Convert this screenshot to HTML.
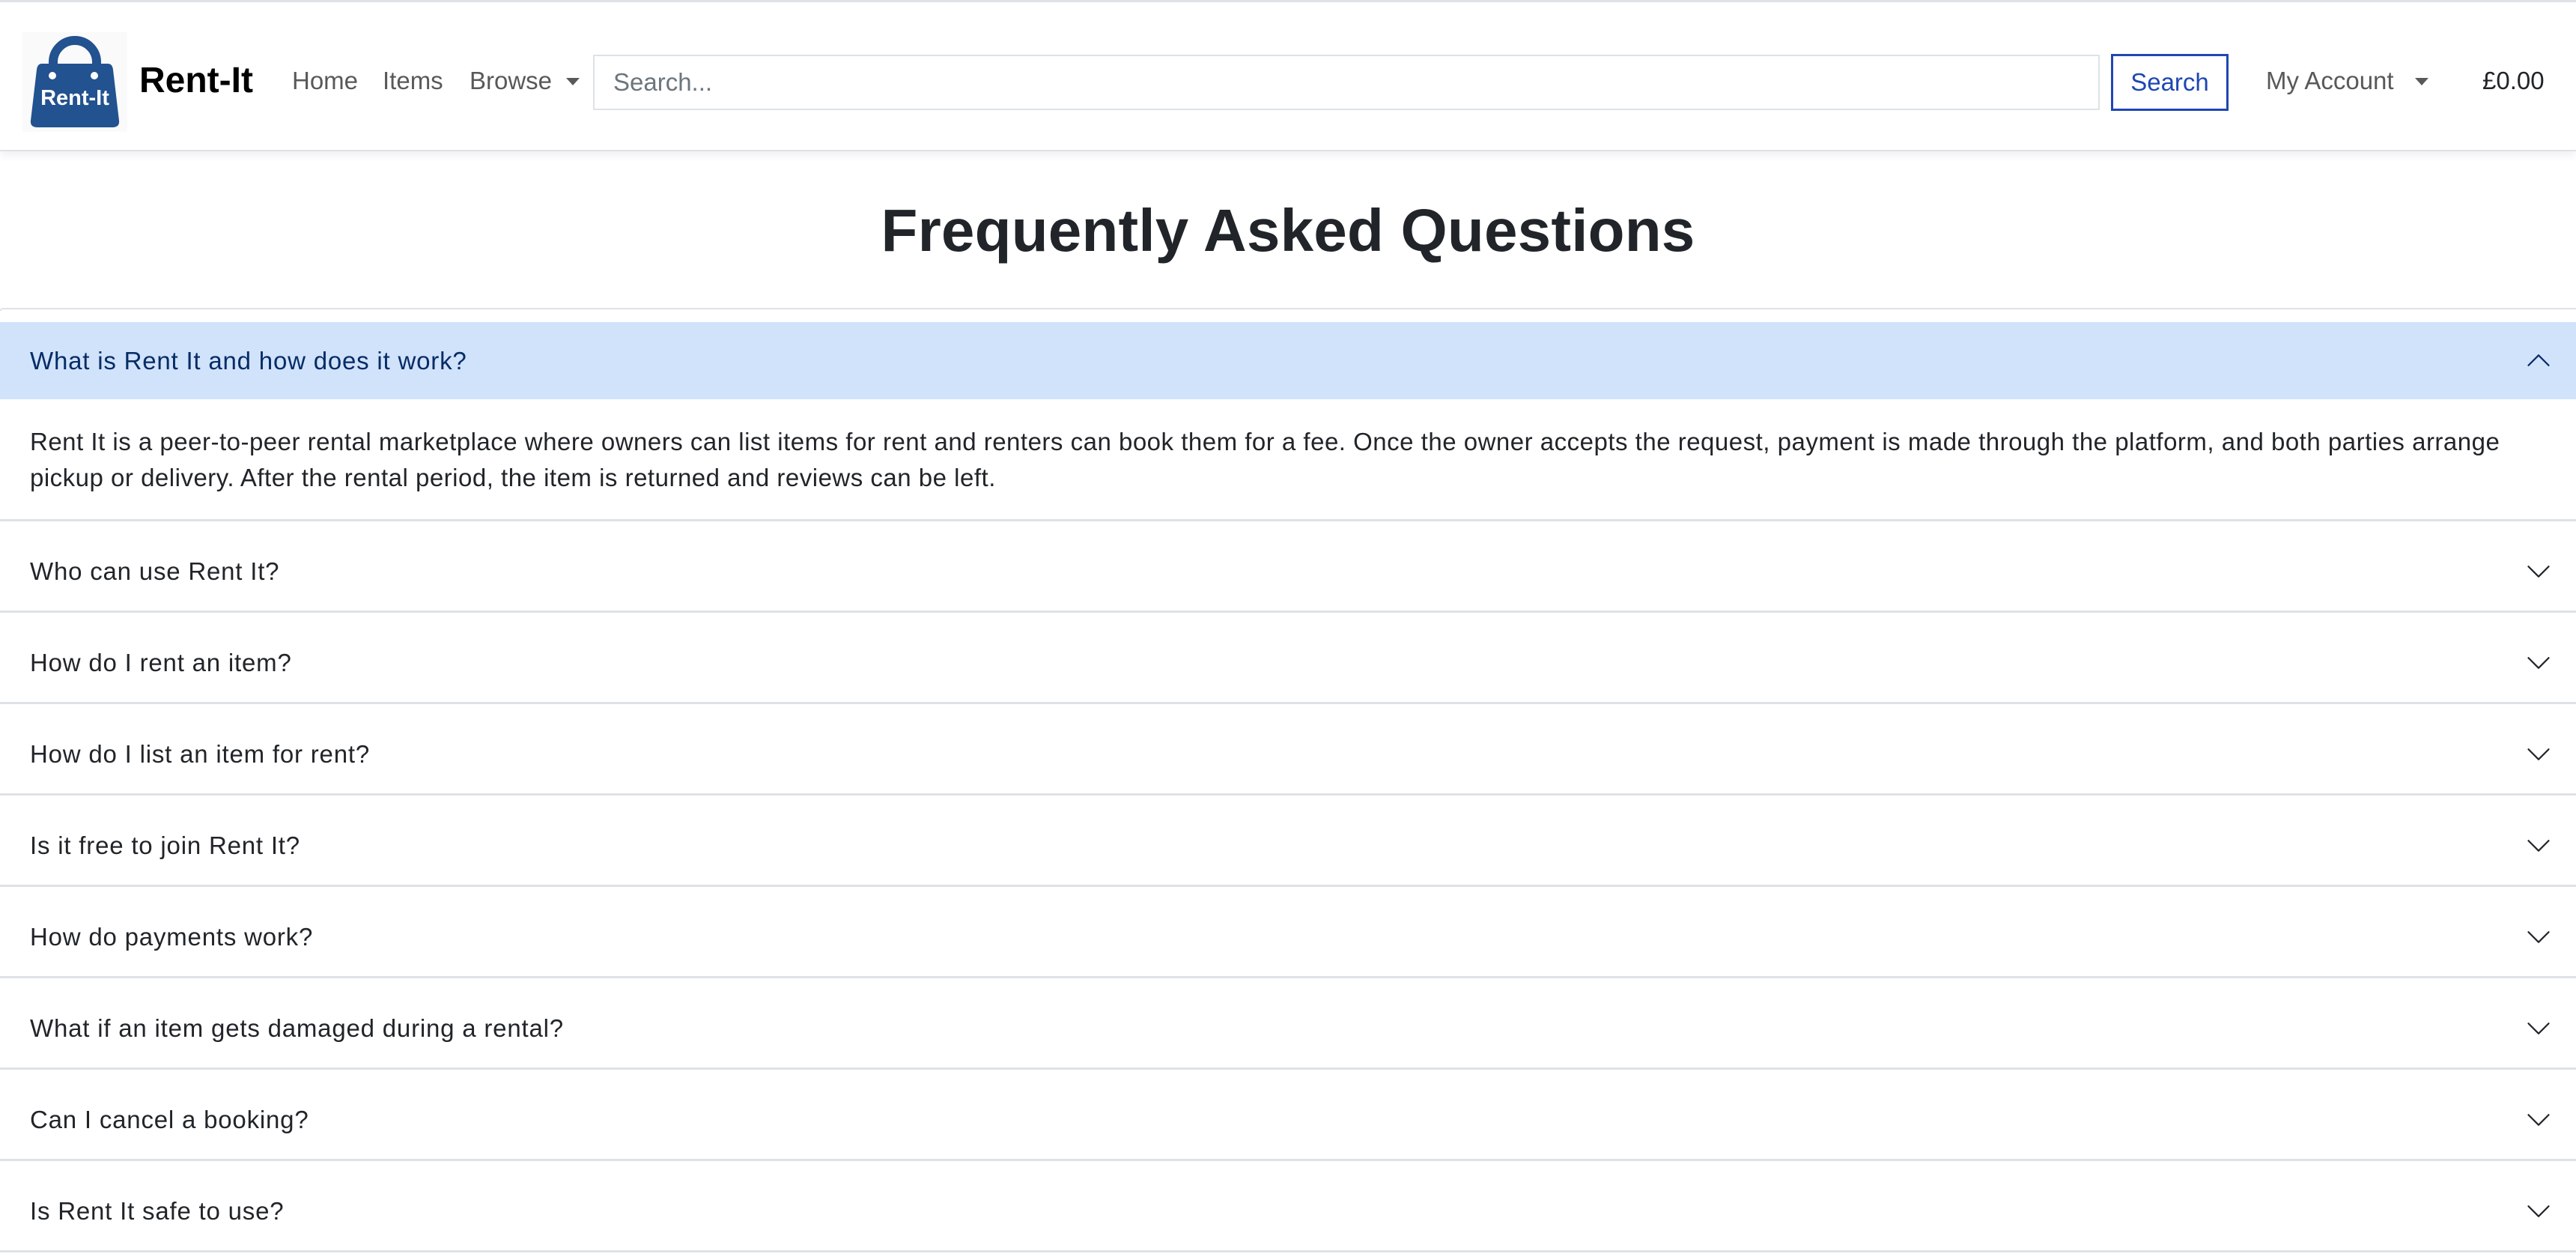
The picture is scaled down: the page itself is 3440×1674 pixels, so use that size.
<!DOCTYPE html>
<html><head><meta charset="utf-8"><style>
*{box-sizing:border-box;margin:0;padding:0}
body{width:3440px;height:1674px;overflow:hidden;background:#fff;font-family:"Liberation Sans",sans-serif;color:#212529;position:relative}
.top{position:absolute;left:0;top:0;width:3440px;height:3px;background:#dee2e6}
.hdr{position:absolute;left:0;top:3px;width:3440px;height:199px;background:#fff;border-bottom:2px solid #dee2e6;box-shadow:0 6px 10px rgba(0,0,0,.06)}
.a{position:absolute;white-space:nowrap}
.nav{font-size:33px;color:#595959;top:87px}
.caret{position:absolute;width:0;height:0;border-left:9px solid transparent;border-right:9px solid transparent;border-top:10px solid #595959}
.inp{position:absolute;left:792px;top:73px;width:2012px;height:74px;border:2px solid #dee2e6;font-size:33px;color:#6c757d;padding:16px 25px}
.btn{position:absolute;left:2819px;top:72px;width:157px;height:76px;border:3px solid #1f47b3;color:#1f47b3;font-size:33px;text-align:center;line-height:70px}
h1{position:absolute;left:0;width:3440px;top:258px;text-align:center;font-size:80px;font-weight:700;line-height:100px;letter-spacing:0.2px}
.acc{position:absolute;left:0;top:411px;width:3440px;height:4px;border-top:2px solid #dee2e6;border-left:2px solid #dee2e6;border-top-left-radius:10px}
.act{position:absolute;left:0;top:430px;width:3440px;height:103px;background:#d1e2fb;color:#052c65;font-size:33px;padding-left:40px;line-height:103px;letter-spacing:0.8px}
.body{position:absolute;left:40px;top:566px;width:3345px;font-size:33px;line-height:48px;color:#212529;letter-spacing:0.5px}
.line{position:absolute;left:0;width:3440px;height:3px;background:#dee2e6}
.q{position:absolute;left:40px;font-size:33px;line-height:40px;color:#212529;letter-spacing:0.8px}
svg.ch{position:absolute;left:3372px;width:36px;height:36px}
</style></head><body>
<div class="top"></div>
<div class="hdr"></div>
<svg class="a" style="left:30px;top:43px" width="140" height="133" viewBox="0 0 140 133">
<rect width="140" height="133" fill="#fafafa"/>
<path d="M41 50 V40 A29 29 0 0 1 99 40 V50" fill="none" stroke="#22528f" stroke-width="12"/>
<path d="M26 42 H114 Q120 42 121 50 L129 118 Q130 127 120 127 H20 Q10 127 11 118 L19 50 Q20 42 26 42 Z" fill="#22528f"/>
<circle cx="40" cy="58" r="5" fill="#fff"/><circle cx="96" cy="58" r="5" fill="#fff"/>
<text x="70" y="97" text-anchor="middle" fill="#fff" font-family="Liberation Sans" font-weight="700" font-size="29">Rent-It</text>
</svg>
<div class="a" style="left:186px;top:80px;font-size:48px;font-weight:700;color:#000;line-height:56px">Rent-It</div>
<div class="a nav" style="left:390px;top:88px;line-height:40px">Home</div>
<div class="a nav" style="left:511px;top:88px;line-height:40px">Items</div>
<div class="a nav" style="left:627px;top:88px;line-height:40px">Browse</div>
<div class="caret" style="left:756px;top:104px"></div>
<div class="inp">Search...</div>
<div class="btn">Search</div>
<div class="a nav" style="left:3026px;top:88px;line-height:40px">My Account</div>
<div class="caret" style="left:3225px;top:104px"></div>
<div class="a" style="left:3315px;top:88px;font-size:33px;line-height:40px;color:#212529">£0.00</div>

<h1>Frequently Asked Questions</h1>
<div class="acc"></div>
<div class="act">What is Rent It and how does it work?</div>
<svg class="ch" style="top:463px" viewBox="0 0 16 16"><path fill="#052c65" transform="rotate(180 8 8)" d="M1.646 4.646a.5.5 0 0 1 .708 0L8 10.293l5.646-5.647a.5.5 0 0 1 .708.708l-6 6a.5.5 0 0 1-.708 0l-6-6a.5.5 0 0 1 0-.708z"/></svg>
<div class="body">Rent It is a peer-to-peer rental marketplace where owners can list items for rent and renters can book them for a fee. Once the owner accepts the request, payment is made through the platform, and both parties arrange pickup or delivery. After the rental period, the item is returned and reviews can be left.</div>
<div class="line" style="top:693px"></div>

<div class="q" style="top:743px">Who can use Rent It?</div>
<svg class="ch" style="top:745px" viewBox="0 0 16 16"><path fill="#212529" d="M1.646 4.646a.5.5 0 0 1 .708 0L8 10.293l5.646-5.647a.5.5 0 0 1 .708.708l-6 6a.5.5 0 0 1-.708 0l-6-6a.5.5 0 0 1 0-.708z"/></svg>
<div class="line" style="top:815px"></div>

<div class="q" style="top:865px">How do I rent an item?</div>
<svg class="ch" style="top:867px" viewBox="0 0 16 16"><path fill="#212529" d="M1.646 4.646a.5.5 0 0 1 .708 0L8 10.293l5.646-5.647a.5.5 0 0 1 .708.708l-6 6a.5.5 0 0 1-.708 0l-6-6a.5.5 0 0 1 0-.708z"/></svg>
<div class="line" style="top:937px"></div>

<div class="q" style="top:987px">How do I list an item for rent?</div>
<svg class="ch" style="top:989px" viewBox="0 0 16 16"><path fill="#212529" d="M1.646 4.646a.5.5 0 0 1 .708 0L8 10.293l5.646-5.647a.5.5 0 0 1 .708.708l-6 6a.5.5 0 0 1-.708 0l-6-6a.5.5 0 0 1 0-.708z"/></svg>
<div class="line" style="top:1059px"></div>

<div class="q" style="top:1109px">Is it free to join Rent It?</div>
<svg class="ch" style="top:1111px" viewBox="0 0 16 16"><path fill="#212529" d="M1.646 4.646a.5.5 0 0 1 .708 0L8 10.293l5.646-5.647a.5.5 0 0 1 .708.708l-6 6a.5.5 0 0 1-.708 0l-6-6a.5.5 0 0 1 0-.708z"/></svg>
<div class="line" style="top:1181px"></div>

<div class="q" style="top:1231px">How do payments work?</div>
<svg class="ch" style="top:1233px" viewBox="0 0 16 16"><path fill="#212529" d="M1.646 4.646a.5.5 0 0 1 .708 0L8 10.293l5.646-5.647a.5.5 0 0 1 .708.708l-6 6a.5.5 0 0 1-.708 0l-6-6a.5.5 0 0 1 0-.708z"/></svg>
<div class="line" style="top:1303px"></div>

<div class="q" style="top:1353px">What if an item gets damaged during a rental?</div>
<svg class="ch" style="top:1355px" viewBox="0 0 16 16"><path fill="#212529" d="M1.646 4.646a.5.5 0 0 1 .708 0L8 10.293l5.646-5.647a.5.5 0 0 1 .708.708l-6 6a.5.5 0 0 1-.708 0l-6-6a.5.5 0 0 1 0-.708z"/></svg>
<div class="line" style="top:1425px"></div>

<div class="q" style="top:1475px">Can I cancel a booking?</div>
<svg class="ch" style="top:1477px" viewBox="0 0 16 16"><path fill="#212529" d="M1.646 4.646a.5.5 0 0 1 .708 0L8 10.293l5.646-5.647a.5.5 0 0 1 .708.708l-6 6a.5.5 0 0 1-.708 0l-6-6a.5.5 0 0 1 0-.708z"/></svg>
<div class="line" style="top:1547px"></div>

<div class="q" style="top:1597px">Is Rent It safe to use?</div>
<svg class="ch" style="top:1599px" viewBox="0 0 16 16"><path fill="#212529" d="M1.646 4.646a.5.5 0 0 1 .708 0L8 10.293l5.646-5.647a.5.5 0 0 1 .708.708l-6 6a.5.5 0 0 1-.708 0l-6-6a.5.5 0 0 1 0-.708z"/></svg>
<div class="line" style="top:1669px"></div>
</body></html>
